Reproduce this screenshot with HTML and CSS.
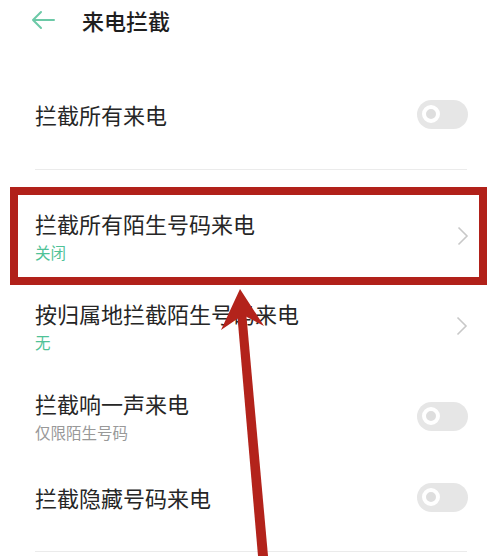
FILE: index.html
```html
<!DOCTYPE html>
<html lang="zh-CN">
<head>
<meta charset="utf-8">
<link rel="stylesheet" href="styles.css">
</head>
<body>
<div class="page">
  <header class="header">
    <svg class="back" width="26" height="20" viewBox="0 0 26 20">
      <path d="M24 10 H3 M11 2 L3 10 L11 18" fill="none" stroke="#6cc9a7" stroke-width="2" stroke-linecap="round" stroke-linejoin="round"/>
    </svg>
    <h1 class="title">来电拦截</h1>
  </header>

  <div class="row row-first">
    <div class="texts"><div class="label">拦截所有来电</div></div>
    <div class="toggle"><span class="knob"></span></div>
  </div>
  <div class="divider"></div>

  <div class="highlight">
    <div class="row row-in-box">
      <div class="texts">
        <div class="label">拦截所有陌生号码来电</div>
        <div class="sub sub-green">关闭</div>
      </div>
      <svg class="chev" width="12" height="20" viewBox="0 0 12 20"><path d="M1.5 1.5 L10 10 L1.5 18.5" fill="none" stroke="#c8c8c8" stroke-width="1.6"/></svg>
    </div>
  </div>

  <div class="row row-3">
    <div class="texts">
      <div class="label">按归属地拦截陌生号码来电</div>
      <div class="sub sub-green">无</div>
    </div>
    <svg class="chev" width="12" height="20" viewBox="0 0 12 20"><path d="M1.5 1.5 L10 10 L1.5 18.5" fill="none" stroke="#c8c8c8" stroke-width="1.6"/></svg>
  </div>

  <div class="row row-4">
    <div class="texts">
      <div class="label">拦截响一声来电</div>
      <div class="sub sub-gray">仅限陌生号码</div>
    </div>
    <div class="toggle"><span class="knob"></span></div>
  </div>

  <div class="row row-5">
    <div class="texts"><div class="label">拦截隐藏号码来电</div></div>
    <div class="toggle"><span class="knob"></span></div>
  </div>
  <div class="divider divider-bottom"></div>

  <svg class="annot" width="500" height="556" viewBox="0 0 500 556">
    <polygon points="236,300 245,300 268,556 258,556" fill="#b3231b"/>
    <polygon points="240,289 264,326 243,315 221,330" fill="#b3231b"/>
  </svg>
</div>
</body>
</html>
```
FILE: styles.css
```css
* { box-sizing: border-box; margin: 0; padding: 0; }
html, body { width: 500px; height: 556px; overflow: hidden; background: #fff; }
body { font-family: "Noto Sans CJK SC", "Noto Sans", sans-serif; color: #222; }
.page { position: relative; width: 500px; height: 556px; }

.header { height: 40px; display: flex; align-items: center; padding-left: 30px; }
.back { display: block; }
.title { font-size: 22px; font-weight: 500; margin-left: 26px; color: #1e1e1e; line-height: 1; }

.row { display: flex; align-items: center; justify-content: space-between; padding: 0 32px 0 35px; }
.row-first { margin-top: 29px; height: 90px; }
.row-in-box { height: 82px; padding: 0 10px 0 17px; }
.row-3 { height: 82px; }
.row-4 { height: 98px; }
.row-5 { height: 64px; }

.texts { display: flex; flex-direction: column; }
.label { font-size: 22px; line-height: 1.2; color: #262626; }
.sub { font-size: 15.5px; line-height: 1.2; margin-top: 7px; }
.sub-green { color: #4fc297; }
.sub-gray { color: #999; }

.divider { height: 1px; background: #ebebeb; margin: 10px 33px 0 35px; }
.divider-bottom { margin-top: 22px; }

.highlight { margin: 17px 13px 0 10px; border: 8px solid #b1211a; height: 98px; }

.toggle { width: 51px; height: 29px; border-radius: 15px; background: #e6e6e6; position: relative; flex: none; }
.knob { position: absolute; left: 5px; top: 5.5px; width: 18px; height: 18px; border-radius: 50%; border: 4px solid #fff; background: #dedede; }

.chev { display: block; flex: none; }

.annot { position: absolute; left: 0; top: 0; pointer-events: none; }
```
